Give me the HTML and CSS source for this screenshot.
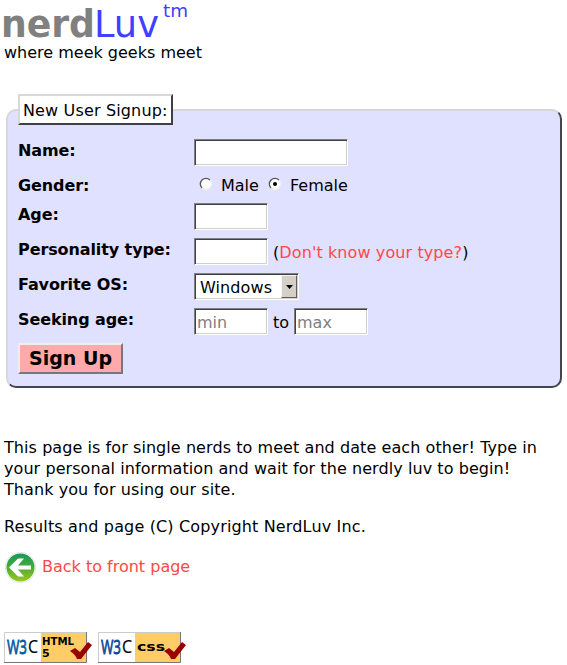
FILE: index.html
```html
<!DOCTYPE html>
<html lang="en">
<head>
<meta charset="utf-8">
<title>NerdLuv</title>
<link rel="stylesheet" href="styles.css">
</head>
<body>
<header>
  <svg class="logo" width="190" height="42" viewBox="0 0 190 42" role="img" aria-label="nerdLuv tm">
    <text class="nerd" x="1" y="37" textLength="94" lengthAdjust="spacingAndGlyphs">nerd</text>
    <text class="luv" x="94" y="37" textLength="65" lengthAdjust="spacingAndGlyphs">Luv</text>
    <text class="tm" x="163" y="17" textLength="25" lengthAdjust="spacingAndGlyphs">tm</text>
  </svg>
  <div class="tagline">where meek geeks meet</div>
</header>
<form class="signup">
  <div class="legend">New User Signup:</div>
  <div class="row"><strong>Name:</strong><span class="field name"></span></div>
  <div class="row gender"><strong>Gender:</strong>
    <span class="radio"><svg width="12" height="12" viewBox="0 0 12 12"><circle cx="6" cy="6" r="5" fill="#fff"/><path d="M2 10A5.500 5.500 0 0 1 10 2" fill="none" stroke="#555" stroke-width="1.300"/><path d="M10 2A5.500 5.500 0 0 1 2 10" fill="none" stroke="#f0eeea" stroke-width="1.300"/></svg></span><span class="male">Male</span>
    <span class="radio"><svg width="12" height="12" viewBox="0 0 12 12"><circle cx="6" cy="6" r="5" fill="#fff"/><path d="M2 10A5.500 5.500 0 0 1 10 2" fill="none" stroke="#555" stroke-width="1.300"/><path d="M10 2A5.500 5.500 0 0 1 2 10" fill="none" stroke="#f0eeea" stroke-width="1.300"/><circle cx="6" cy="6" r="2" fill="#000"/></svg></span><span>Female</span>
  </div>
  <div class="row"><strong>Age:</strong><span class="field"></span></div>
  <div class="row"><strong>Personality type:</strong><span class="field"></span><span class="after">(<a>Don't know your type?</a>)</span></div>
  <div class="row"><strong>Favorite OS:</strong><span class="field select"><span>Windows</span><span class="arrow"><svg width="7" height="4" viewBox="0 0 7 4"><path d="M0 0h7L3.500 4z"/></svg></span></span></div>
  <div class="row"><strong>Seeking age:</strong><span class="field">min</span><span class="after to">to</span><span class="field">max</span></div>
  <button type="button">Sign Up</button>
</form>
<footer>
  <p class="intro">This page is for single nerds to meet and date each other! Type in<br>your personal information and wait for the nerdly luv to begin!<br>Thank you for using our site.</p>
  <p class="copyright">Results and page (C) Copyright NerdLuv Inc.</p>
  <div class="back">
    <svg width="32" height="32" viewBox="0 0 32 32"><defs><linearGradient id="g" x2="0" y2="1"><stop offset="0" stop-color="#16985a"/><stop offset=".5" stop-color="#4aab38"/><stop offset="1" stop-color="#9cc81c"/></linearGradient></defs><circle cx="16.500" cy="16.500" r="15.200" fill="#fff" stroke="#ddd" stroke-width=".8"/><circle cx="16.500" cy="16.500" r="14" fill="url(#g)"/><path d="M14 7.500h6l-6 7h13v4H14l6 7h-6l-9-9z" fill="#fff"/></svg>
    <a>Back to front page</a>
  </div>
  <div class="badges">
    <svg width="90" height="32" viewBox="0 0 90 32"><path d="M0 0h83v31H0z" fill="#fff"/><path d="M37 1h45v29H37z" fill="#fc6"/><path d="M.5 30V.5H82" fill="none" stroke="#ccc"/><path d="M82.500 0v30.500H0" fill="none" stroke="#777"/><text class="w3" x="3" y="22" fill="#005a9c" stroke="#005a9c" textLength="20" lengthAdjust="spacingAndGlyphs">W3</text><text class="w3 c" x="24" y="21" textLength="10" lengthAdjust="spacingAndGlyphs">C</text><text class="badge" x="38" y="13" textLength="32" lengthAdjust="spacingAndGlyphs">HTML</text><text class="badge" x="38" y="25">5</text><path d="m66 19 5-3 5 4 8-10 4 3-11 14h-4q-2-5-7-8z" fill="#900"/></svg>
    <svg width="90" height="32" viewBox="0 0 90 32"><path d="M0 0h83v31H0z" fill="#fff"/><path d="M37 1h45v29H37z" fill="#fc6"/><path d="M.5 30V.5H82" fill="none" stroke="#ccc"/><path d="M82.500 0v30.500H0" fill="none" stroke="#777"/><text class="w3" x="3" y="22" fill="#0c479d" stroke="#0c479d" textLength="20" lengthAdjust="spacingAndGlyphs">W3</text><text class="w3 c" x="24" y="21" textLength="10" lengthAdjust="spacingAndGlyphs">C</text><text class="badge css" x="39" y="19" textLength="28" lengthAdjust="spacingAndGlyphs">css</text><path d="m66 19 5-3 5 4 8-10 4 3-11 14h-4q-2-5-7-8z" fill="#900"/></svg>
  </div>
</footer>
</body>
</html>
```
FILE: styles.css
```css
* { box-sizing: border-box; }
body { margin: 0; height: 665px; overflow: hidden; background: #fff; color: #000; font: 16px/21px Verdana, "DejaVu Sans", sans-serif; }
svg { display: block; flex: none; overflow: visible; }
.logo { height: 42px; }
.nerd { font-size: 37px; font-weight: bold; fill: #808080; }
.luv { font-size: 38px; fill: #4040ff; }
.tm { font-size: 18px; fill: #4040ff; }
.tagline { padding-left: 4px; }
.signup { width: 556px; height: 279px; margin: 46px 0 0 6px; padding: 0 10px; border: 2px solid; border-color: #d8d8d8 #44444c #44444c #d8d8d8; border-radius: 10px; background: #e0e0ff; }
.legend { width: 155px; height: 31px; margin: -17px 0 14px; padding: 4px 3px; border: 2px solid; border-color: #d8d8d8 #404040 #404040 #d8d8d8; background: #fff; white-space: nowrap; letter-spacing: .15px; }
.row { display: flex; height: 35px; white-space: nowrap; }
.gender { height: 29px; }
.row strong { width: 176px; flex: none; padding-top: 1px; letter-spacing: -.1px; }
.field { width: 74px; height: 27px; flex: none; padding: 3px 2px; border: 1px solid; border-color: #808080 #fff #fff #808080; box-shadow: inset 1px 1px #404040, inset -1px -1px #d4d0c8; background: #fff; color: #808080; }
.name { width: 154px; }
.after { padding: 4px 0 0 5px; letter-spacing: .1px; }
.to { width: 26px; }
.select { display: flex; width: 105px; padding: 1px; color: #000; }
.select > span:first-child { width: 85px; padding: 2px 0 0 4px; letter-spacing: .1px; }
.arrow { display: flex; align-items: center; justify-content: center; width: 16px; height: 23px; background: #d4d0c8; border: 1px solid; border-color: #f5f5f5 #606060 #606060 #f5f5f5; }
.radio { padding: 4px 0 0 6px; }
.gender > span:not(.radio) { padding-top: 1px; }
.male { width: 42px; }
.radio + span { margin-left: 9px; }
.male + .radio { padding-left: 6px; }
a { color: #ff4848; }
button { display: block; width: 105px; height: 31px; margin: 0; padding: 0; border: 2px solid; border-color: #eee #777 #777 #eee; background: #faa; color: #000; font: bold 19px/27px Verdana, "DejaVu Sans", sans-serif; white-space: nowrap; }
footer { padding: 49px 4px 0; white-space: nowrap; }
p { margin: 0 0 16px; }
.intro { letter-spacing: .07px; }
.copyright { letter-spacing: .15px; }
.back { display: flex; margin-top: -2px; height: 32px; }
.back a { padding: 5px 0 0 6px; }
.badges { display: flex; gap: 4px; margin-top: 49px; }
.w3 { font: 20px "Open Sans", sans-serif; stroke-width: .8px; }
.c { font-size: 19px; stroke: #000; stroke-width: .2px; }
.badge { font: bold 11px "DejaVu Sans", sans-serif; }
.css { font-size: 13px; }
```
